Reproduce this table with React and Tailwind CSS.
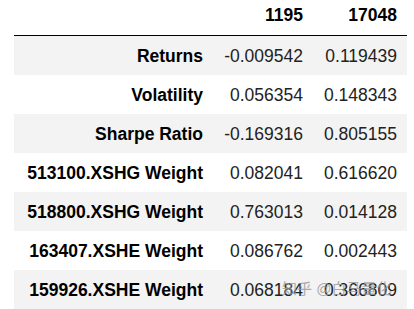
import React from "react";

const rows = [
  ["Returns", "-0.009542", "0.119439"],
  ["Volatility", "0.056354", "0.148343"],
  ["Sharpe Ratio", "-0.169316", "0.805155"],
  ["513100.XSHG Weight", "0.082041", "0.616620"],
  ["518800.XSHG Weight", "0.763013", "0.014128"],
  ["163407.XSHE Weight", "0.086762", "0.002443"],
  ["159926.XSHE Weight", "0.068184", "0.366809"],
];

export default function App() {
  return (
    <div
      className="w-[414px] h-[309px] bg-white overflow-hidden relative text-[17.5px] leading-[20px] text-black"
      style={{ fontFamily: '"Liberation Sans", Arial, sans-serif' }}
    >
      <div className="ml-[14px] w-[393px]">
        {/* Header */}
        <div className="flex h-[36px] pt-[5px] border-b border-black font-bold">
          <div className="w-[199px]" />
          <div className="w-[100px] pr-[10px] text-right">1195</div>
          <div className="w-[94px] pr-[10px] text-right">17048</div>
        </div>

        {/* Body */}
        {rows.map((r, i) => (
          <div
            key={r[0]}
            className={`flex items-center h-[39px] ${i % 2 === 0 ? "bg-[#f3f3f3]" : "bg-white"}`}
          >
            <div className="w-[199px] pr-[10px] text-right font-bold">{r[0]}</div>
            <div className="w-[100px] pr-[10px] text-right text-[#222]">{r[1]}</div>
            <div className="w-[94px] pr-[10px] text-right text-[#222]">{r[2]}</div>
          </div>
        ))}
      </div>

      {/* watermark */}
      <div
        className="absolute left-[282px] top-[280px] text-[15px] leading-[18px] text-[#9a9a9a] opacity-80 whitespace-nowrap"
        style={{ fontFamily: '"Liberation Sans", "Noto Sans CJK SC", sans-serif' }}
      >
        知乎 @白马量化
      </div>
    </div>
  );
}
